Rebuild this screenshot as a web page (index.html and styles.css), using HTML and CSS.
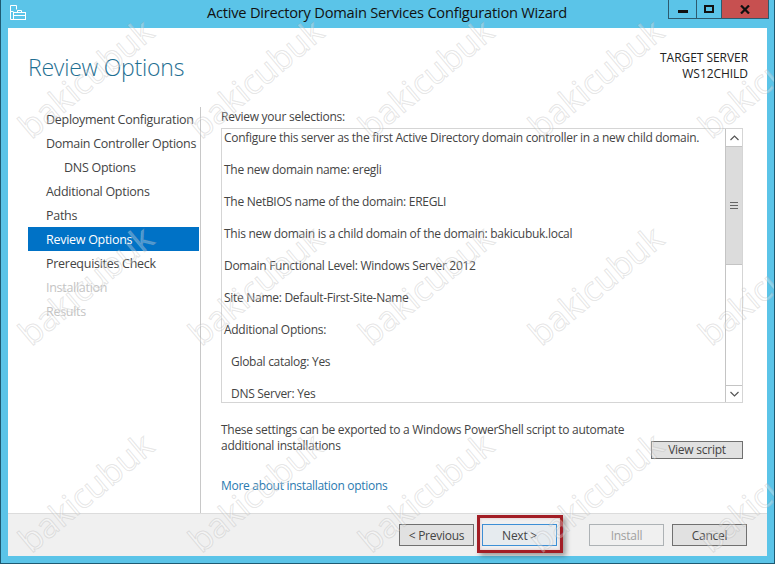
FILE: index.html
```html
<!DOCTYPE html>
<html lang="en">
<head>
<meta charset="utf-8">
<title>Active Directory Domain Services Configuration Wizard</title>
<link rel="stylesheet" href="styles.css">
</head>
<body>
<div class="window">
  <header class="titlebar">
    <svg class="app-icon" width="16" height="15" viewBox="0 0 16 15" fill="none" stroke="#fff" stroke-width="1">
      <path d="M.5 14.500V.5H6.500V4.500"/>
      <path d="M.5 6.500H3.500"/>
      <rect x="3.500" y="7.500" width="12" height="7"/>
      <path d="M7.500 7.500V5.500H11.500V7.500"/>
      <path d="M3.500 10.500H15.500"/>
      <path d="M.5 14.500H3.500"/>
    </svg>
    <div class="title">Active Directory Domain Services Configuration Wizard</div>
    <div class="controls">
      <div class="ctl ctl-min"><span class="min-glyph"></span></div>
      <div class="ctl ctl-max"><span class="max-glyph"></span></div>
      <div class="ctl ctl-close">
        <svg width="10" height="9" viewBox="0 0 10 9"><path d="M1 .5L9 8.500M9 .5L1 8.500" stroke="#111" stroke-width="2.200"/></svg>
      </div>
    </div>
  </header>

  <main class="client">
    <div class="top">
      <h1 class="heading">Review Options</h1>
      <div class="target">TARGET SERVER<br>WS12CHILD</div>
    </div>
    <div class="middle">
      <nav class="nav">
        <div class="nav-item">Deployment Configuration</div>
        <div class="nav-item">Domain Controller Options</div>
        <div class="nav-item sub">DNS Options</div>
        <div class="nav-item">Additional Options</div>
        <div class="nav-item">Paths</div>
        <div class="nav-item active">Review Options</div>
        <div class="nav-item">Prerequisites Check</div>
        <div class="nav-item disabled">Installation</div>
        <div class="nav-item disabled">Results</div>
      </nav>
      <section class="pane">
        <div class="label">Review your selections:</div>
        <div class="review">
          <div class="review-text">
            <p>Configure this server as the first Active Directory domain controller in a new child domain.</p>
            <p>The new domain name: eregli</p>
            <p>The NetBIOS name of the domain: EREGLI</p>
            <p>This new domain is a child domain of the domain: bakicubuk.local</p>
            <p>Domain Functional Level: Windows Server 2012</p>
            <p>Site Name: Default-First-Site-Name</p>
            <p>Additional Options:</p>
            <p class="indent">Global catalog: Yes</p>
            <p class="indent">DNS Server: Yes</p>
          </div>
          <div class="scrollbar">
            <div class="arrow">
              <svg width="9" height="6" viewBox="0 0 9 6" fill="none"><path d="M.5 5L4.500 1L8.500 5" stroke="#555" stroke-width="1.200"/></svg>
            </div>
            <div class="track">
              <div class="thumb"><span class="grip"></span></div>
            </div>
            <div class="arrow arrow-down">
              <svg width="9" height="6" viewBox="0 0 9 6" fill="none"><path d="M.5 1L4.500 5L8.500 1" stroke="#555" stroke-width="1.200"/></svg>
            </div>
          </div>
        </div>
        <div class="export">
          <p class="export-text">These settings can be exported to a Windows PowerShell script to automate additional installations</p>
          <button class="btn view-script">View script</button>
        </div>
        <a class="more" href="#">More about installation options</a>
      </section>
    </div>
    <footer class="footer">
      <button class="btn">&lt; Previous</button>
      <button class="btn btn-next">Next &gt;</button>
      <button class="btn btn-install" disabled>Install</button>
      <button class="btn">Cancel</button>
    </footer>
  </main>

  <div class="watermarks" aria-hidden="true">
    <span>bakicubuk</span><span>bakicubuk</span><span>bakicubuk</span><span>bakicubuk</span><span>bakicubuk</span>
    <span>bakicubuk</span><span>bakicubuk</span><span>bakicubuk</span><span>bakicubuk</span><span>bakicubuk</span>
    <span>bakicubuk</span><span>bakicubuk</span><span>bakicubuk</span><span>bakicubuk</span><span>bakicubuk</span>
  </div>
</div>
</body>
</html>
```
FILE: styles.css
```css
* { box-sizing: border-box; }
html, body { margin: 0; padding: 0; }
body {
  width: 775px;
  height: 564px;
  overflow: hidden;
  font-family: "Open Sans", "Noto Sans", sans-serif;
  font-size: 12px;
  color: #444;
}
.window {
  position: relative;
  width: 775px;
  height: 564px;
  background: #5bc4e8;
  padding: 0 7px 7px 7px;
  border: 1px solid #1e5a72;
  border-top: 0;
  display: flex;
  flex-direction: column;
  overflow: hidden;
}
.titlebar {
  height: 28px;
  flex: none;
  display: flex;
  position: relative;
  margin: 0 -7px;
}
.app-icon { margin: 5px 0 0 9px; }
.title {
  position: absolute;
  left: 206px;
  top: 2px;
  font-size: 14.670px;
  line-height: 20px;
  letter-spacing: -.24px;
  color: #111;
  white-space: nowrap;
}
.controls {
  position: absolute;
  top: 0;
  left: 667px;
  display: flex;
  height: 19px;
  border: 1px solid #2d5a6e;
  border-top: 0;
}
.ctl { display: flex; align-items: center; justify-content: center; height: 18px; }
.ctl-min { width: 28px; border-right: 1px solid #2d5a6e; }
.ctl-max { width: 25px; border-right: 1px solid #2d5a6e; }
.ctl-close { width: 46px; background: #c75050; }
.min-glyph { width: 10px; height: 3px; background: #111; margin-top: 5px; }
.max-glyph { width: 10px; height: 8px; border: 2px solid #111; }

.client {
  flex: 1;
  min-height: 0;
  background: #fff;
  display: flex;
  flex-direction: column;
  width: 759px;
}
.top {
  height: 79px;
  flex: none;
  display: flex;
  justify-content: space-between;
  padding: 0 19px 0 20px;
}
.heading {
  margin: 23px 0 0;
  font-size: 23px;
  line-height: 32px;
  font-weight: 300;
  letter-spacing: -.22px;
  color: #1f6f92;
}
.target {
  margin-top: 22px;
  text-align: right;
  font-size: 12px;
  line-height: 16px;
  letter-spacing: -.05px;
  color: #222;
}
.middle { flex: 1; min-height: 0; display: flex; }
.nav {
  width: 193px;
  flex: none;
  border-right: 1px solid #c8c8c8;
  padding-left: 20px;
}
.nav-item {
  width: 171px;
  height: 24px;
  line-height: 26px;
  padding-left: 18px;
  font-size: 12.500px;
  letter-spacing: -.28px;
  white-space: nowrap;
  color: #444;
}
.nav-item.sub { padding-left: 36px; }
.nav-item.active { background: #0072c6; color: #fff; }
.nav-item.disabled { color: #c4c4c4; }

.pane { flex: 1; padding: 0 24px 0 20px; }
.label { height: 21px; padding-top: 2px; line-height: 16px; letter-spacing: -.25px; font-size: 12px; }
.review {
  height: 275px;
  border: 1px solid #d5d5d5;
  display: flex;
  overflow: hidden;
}
.review-text { flex: 1; padding: 0 2px; overflow: hidden; }
.review-text p {
  margin: 0;
  height: 32px;
  line-height: 18px;
  white-space: nowrap;
  font-size: 12px;
  letter-spacing: -.285px;
}
.review-text .indent { padding-left: 7px; }
.scrollbar {
  width: 17px;
  flex: none;
  border-left: 1px solid #c4c4c4;
  display: flex;
  flex-direction: column;
}
.arrow { height: 17px; flex: none; display: flex; align-items: center; justify-content: center; }
.arrow-down { border-top: 1px solid #c4c4c4; }
.track { flex: 1; }
.thumb {
  height: 119px;
  background: #dcdcdc;
  border-top: 1px solid #c4c4c4;
  border-bottom: 1px solid #c4c4c4;
  display: flex;
  align-items: center;
  justify-content: center;
}
.grip {
  width: 8px;
  height: 7px;
  border-top: 1px solid #666;
  border-bottom: 1px solid #666;
  background: linear-gradient(#666, #666) center / 100% 1px no-repeat;
}
.export {
  display: flex;
  justify-content: space-between;
  margin-top: 19px;
  height: 56px;
}
.export-text { margin: 0; width: 420px; line-height: 16px; font-size: 12px; letter-spacing: -.285px; }
.more {
  display: block;
  color: #2a7ab0;
  text-decoration: none;
  line-height: 16px;
  letter-spacing: -.3px;
}
.btn {
  width: 75px;
  height: 22px;
  padding: 0;
  font: inherit;
  font-size: 12px;
  letter-spacing: -.25px;
  color: #444;
  background: #e1e1e1;
  border: 1px solid #707070;
}
.view-script { width: 92px; height: 18px; line-height: 14px; margin-top: 19px; }
.footer {
  height: 43px;
  flex: none;
  background: #f0f0f0;
  border-top: 1px solid #dcdcdc;
  display: flex;
  padding: 10px 0 0 391px;
  gap: 8px;
}
.btn-next {
  position: relative;
  background: #e6ebef;
  border-color: #3c8fd6;
}
.btn-next::after {
  content: "";
  box-sizing: border-box;
  position: absolute;
  left: -6px;
  top: -10px;
  width: 86px;
  height: 38px;
  border: 3px solid #a21d25;
  box-shadow: 3px 3px 5px rgba(0, 0, 0, .35), inset 0 0 3px rgba(162, 29, 37, .25);
}
.btn-install {
  margin-left: 24px;
  background: #f0f0f0;
  color: #a0a0a0;
  border-color: #adb2b5;
}
.watermarks {
  position: absolute;
  left: -1px;
  top: -26px;
  width: 850px;
  display: grid;
  grid-template-columns: repeat(5, 170px);
  grid-auto-rows: 207px;
  pointer-events: none;
}
.watermarks span {
  display: flex;
  align-items: center;
  justify-content: center;
  font-family: "Open Sans", sans-serif;
  font-size: 34px;
  color: rgba(255, 255, 255, .3);
  -webkit-text-stroke: 1px rgba(170, 170, 170, .3);
  transform: rotate(-40deg);
}
```
